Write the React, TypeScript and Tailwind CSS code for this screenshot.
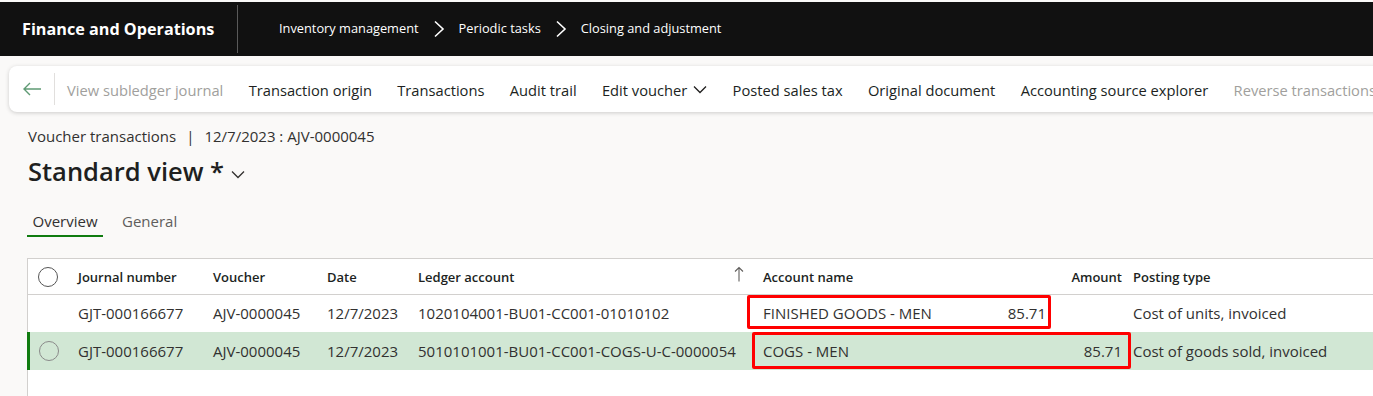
import React from 'react';

const font = { fontFamily: '"Segoe UI", "Open Sans", sans-serif' };

const Chevron = ({ className = '' }: { className?: string }) => (
	<svg width="12" height="18" viewBox="0 0 12 18" className={className}>
		<path d="M2 1.5 L10 9 L2 16.5" fill="none" stroke="currentColor" strokeWidth="1.6" />
	</svg>
);

const DownChevron = ({ className = '' }: { className?: string }) => (
	<svg width="14" height="9" viewBox="0 0 14 9" className={className}>
		<path d="M1 1.5 L7 7.5 L13 1.5" fill="none" stroke="currentColor" strokeWidth="1.3" />
	</svg>
);

const UpArrow = () => (
	<svg width="10" height="16" viewBox="0 0 10 16" className="-mt-[8px]">
		<path d="M5 15.5 V1.5 M1 5.5 L5 1.5 L9 5.5" fill="none" stroke="#605e5c" strokeWidth="1.1" />
	</svg>
);

const Circle = ({ light }: { light?: boolean }) => (
	<span className={`block w-[20px] h-[20px] rounded-full border ${light ? 'border-[#8a8a8a]' : 'border-[#555]'}`} />
);

const toolbarItems = [
	{ label: 'Transaction origin' },
	{ label: 'Transactions' },
	{ label: 'Audit trail' },
	{ label: 'Edit voucher', menu: true },
	{ label: 'Posted sales tax' },
	{ label: 'Original document' },
	{ label: 'Accounting source explorer' }
];

export default function App() {
	return (
		<div className="w-[1373px] h-[396px] overflow-hidden bg-[#faf9f8] text-[#323130]" style={font}>
			{/* Top bar */}
			<div className="mt-[2px] h-[54px] bg-[#111111] flex items-center text-white">
				<div className="w-[237px] pl-[22px] text-[16.2px] font-bold">Finance and Operations</div>
				<div className="w-px h-[48px] bg-[#5a5a5a]" />
				<div className="flex items-center pl-[41px] text-[12.8px]">
					<span>Inventory management</span>
					<Chevron className="mx-[14px]" />
					<span>Periodic tasks</span>
					<Chevron className="mx-[14px]" />
					<span>Closing and adjustment</span>
				</div>
			</div>

			{/* Action pane */}
			<div className="ml-[9px] mt-[10px] h-[46px] w-[1400px] bg-white rounded-lg shadow-[0_1px_4px_rgba(0,0,0,0.18)] flex items-center">
				<div className="w-[45px] flex justify-center">
					<svg width="20" height="14" viewBox="0 0 20 14">
						<path d="M19 7 H2 M8 1 L2 7 L8 13" fill="none" stroke="#5f9a74" strokeWidth="1.4" />
					</svg>
				</div>
				<div className="w-px h-[32px] bg-[#e1dfdd]" />
				<div className="flex items-center gap-[25.3px] pl-[12px] text-[14.7px] whitespace-nowrap mt-[2px]">
					<span className="text-[#a19f9d]">View subledger journal</span>
					{toolbarItems.map((it) => (
						<span key={it.label} className="flex items-center gap-[6px] text-[#201f1e]">
							{it.label}
							{it.menu && <DownChevron />}
						</span>
					))}
					<span className="text-[#a19f9d]">Reverse transactions</span>
				</div>
			</div>

			{/* Header */}
			<div className="pl-[28px] mt-[14px] h-[20px] flex items-center text-[15px] text-[#323130]">
				Voucher transactions <span className="mx-[10px]">|</span> 12/7/2023 : AJV-0000045
			</div>
			<div className="pl-[28px] mt-[10px] h-[30px] flex items-center">
				<span className="text-[25.5px] font-semibold text-[#201f1e]">Standard view *</span>
				<DownChevron className="ml-[7px] mt-[6px] text-[#323130]" />
			</div>

			{/* Tabs */}
			<div className="pl-[27px] mt-[24px] flex text-[15px]">
				<div className="w-[76px] flex flex-col items-center">
					<span className="h-[22px] flex items-center text-[#323130]">Overview</span>
					<span className="mt-[3px] h-[2px] w-full bg-[#107c10]" />
				</div>
				<span className="ml-[19px] h-[22px] flex items-center text-[#605e5c]">General</span>
			</div>

			{/* Grid */}
			<div className="ml-[27px] mt-[21px] w-[1400px] h-[200px] bg-white border-l border-t border-[#d2d0ce]">
				<div className="h-[36px] pt-[3px] flex items-center border-b border-[#d2d0ce] text-[13px] font-semibold text-[#201f1e]">
					<div className="w-[40px] flex justify-center -mt-[3px]"><Circle /></div>
					<div className="w-[135px] pl-[10px]">Journal number</div>
					<div className="w-[114px] pl-[10px]">Voucher</div>
					<div className="w-[91px] pl-[10px]">Date</div>
					<div className="w-[345px] pl-[10px] flex items-center justify-between pr-[9px]">
						<span>Ledger account</span>
						<UpArrow />
					</div>
					<div className="w-[377px] pl-[10px] flex justify-between pr-[8px]">
						<span>Account name</span>
						<span>Amount</span>
					</div>
					<div className="pl-[3px]">Posting type</div>
				</div>

				{/* Row 1 */}
				<div className="h-[37px] flex items-center text-[15px] text-[#323130]">
					<div className="w-[40px]" />
					<div className="w-[135px] pl-[10px]">GJT-000166677</div>
					<div className="w-[114px] pl-[10px]">AJV-0000045</div>
					<div className="w-[91px] pl-[10px]">12/7/2023</div>
					<div className="w-[345px] pl-[10px]">1020104001-BU01-CC001-01010102</div>
					<div className="w-[377px] h-full relative">
						<div className="absolute left-[-6px] top-0 w-[304px] h-[34px] border-[3px] border-[#ff0000] rounded-[2px]" />
						<div className="w-[293px] h-full pl-[10px] flex items-center justify-between">
							<span>FINISHED GOODS - MEN</span>
							<span>85.71</span>
						</div>
					</div>
					<div className="pl-[3px]">Cost of units, invoiced</div>
				</div>

				{/* Row 2 */}
				<div className="h-[38px] flex items-center text-[15px] text-[#323130] bg-[#d1e7d4] border-l-[3px] border-[#107c10] -ml-px">
					<div className="w-[38px] flex justify-center"><Circle light /></div>
					<div className="w-[135px] pl-[10px]">GJT-000166677</div>
					<div className="w-[114px] pl-[10px]">AJV-0000045</div>
					<div className="w-[91px] pl-[10px]">12/7/2023</div>
					<div className="w-[345px] pl-[10px]">5010101001-BU01-CC001-COGS-U-C-0000054</div>
					<div className="w-[377px] h-full relative">
						<div className="absolute left-[-1px] top-0 w-[379px] h-[37px] border-[3px] border-[#ff0000] rounded-[2px]" />
						<div className="h-full pl-[10px] pr-[8px] flex items-center justify-between">
							<span>COGS - MEN</span>
							<span>85.71</span>
						</div>
					</div>
					<div className="pl-[3px]">Cost of goods sold, invoiced</div>
				</div>
			</div>
		</div>
	);
}
